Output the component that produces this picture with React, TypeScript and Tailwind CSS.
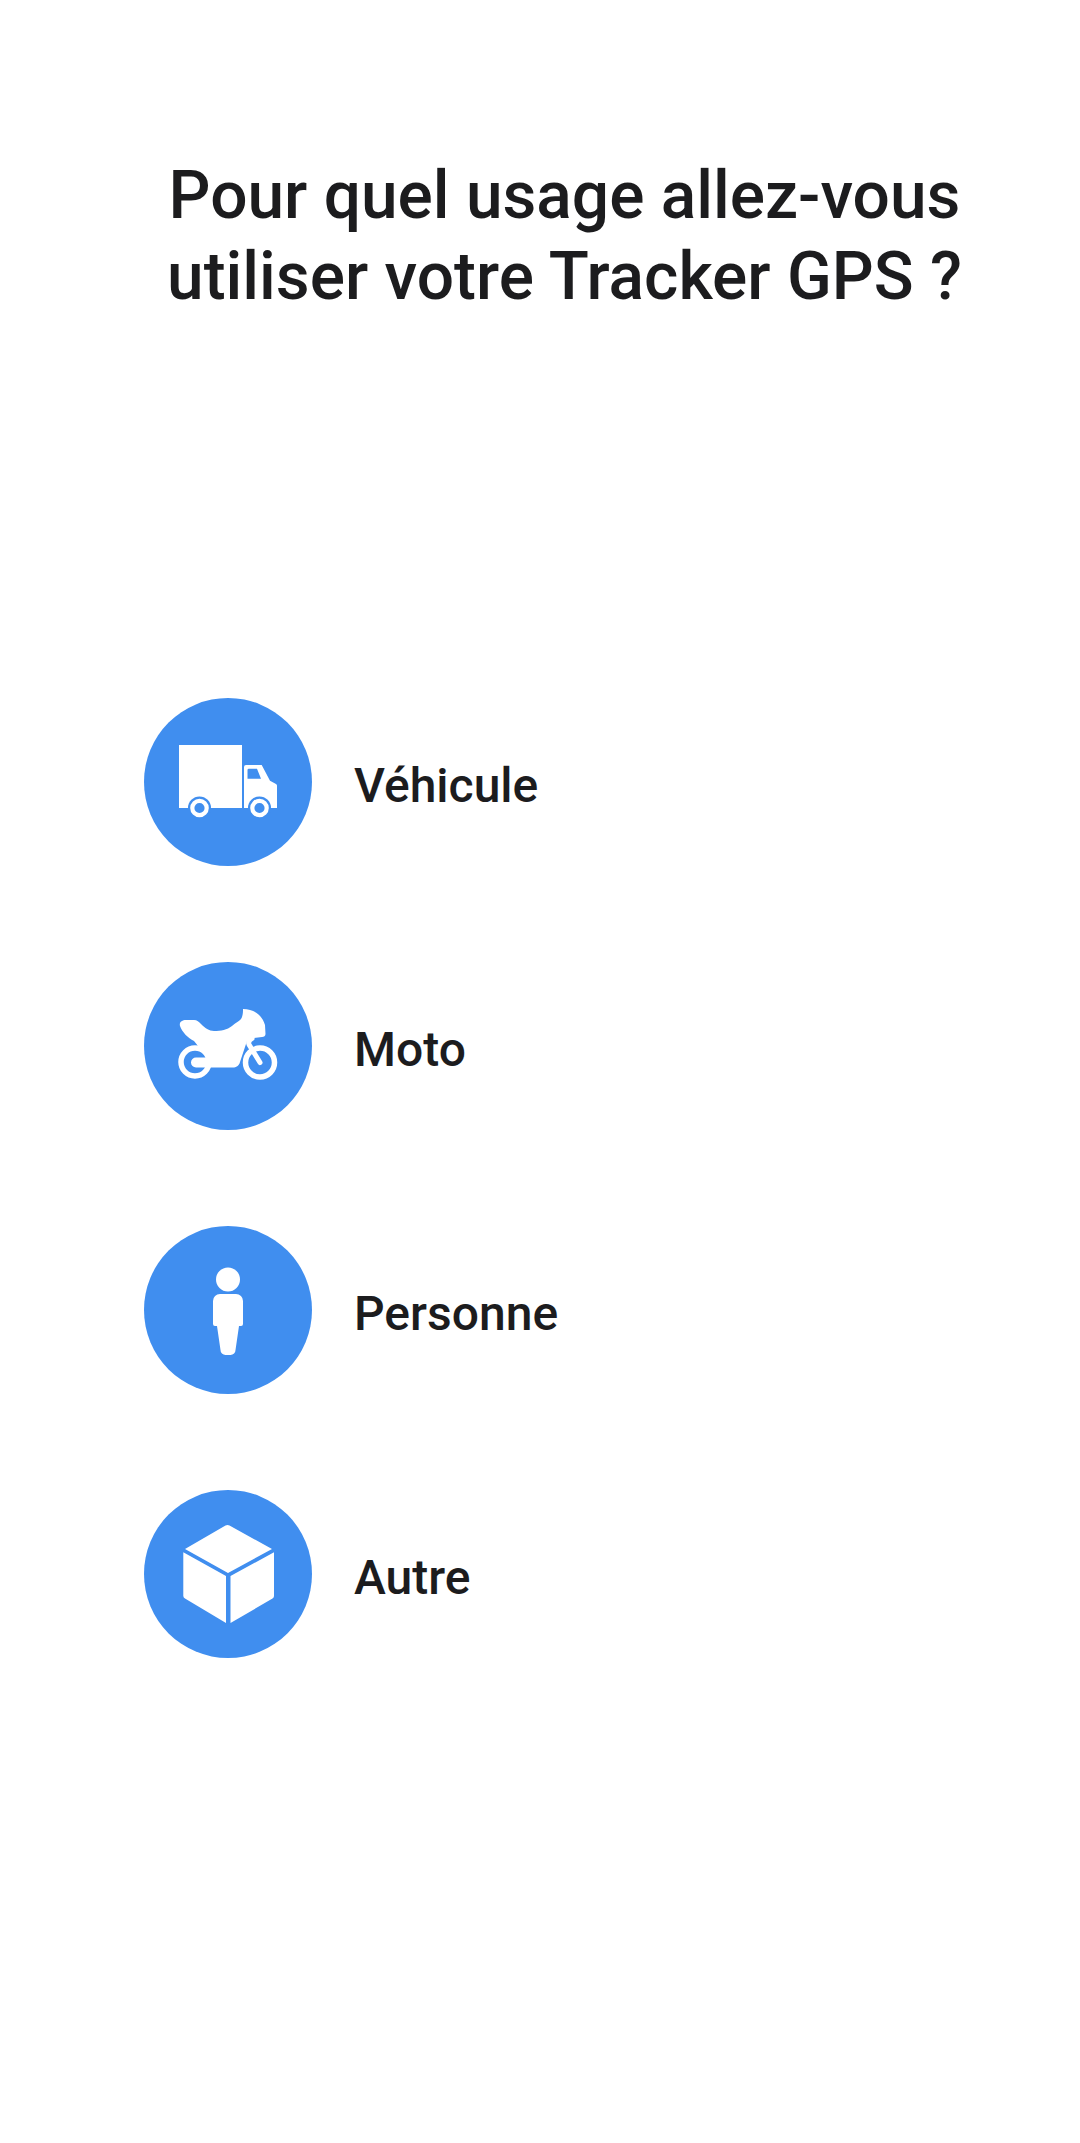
const rows = [
  { label: "Véhicule", icon: <TruckIcon /> },
  { label: "Moto", icon: <BikeIcon /> },
  { label: "Personne", icon: <PersonIcon /> },
  { label: "Autre", icon: <BoxIcon /> },
];

// all icons share the circle's 168 box
function TruckIcon() {
  return (
    <svg viewBox="0 0 168 168" className="w-[168px] h-[168px]">
      <path fill="#fff" d="M35 47h63v63H35z" />
      <path fill="#fff" fillRule="evenodd" d="M100 69a2 2 0 0 1 2-2h15.700l8.300 15.700 6 3.300a2 2 0 0 1 1 2V110h-33zM103.500 72v8.700h13.500l-4-10h-8.200a1.300 1.300 0 0 0-1.300 1.300z" />
      <circle cx="55.500" cy="110" r="11.500" fill="#408eef" />
      <circle cx="115.500" cy="110" r="11.500" fill="#408eef" />
      <circle cx="55.500" cy="110" r="7.200" fill="none" stroke="#fff" strokeWidth="4.200" />
      <circle cx="115.500" cy="110" r="7.200" fill="none" stroke="#fff" strokeWidth="4.200" />
    </svg>
  );
}

function BikeIcon() {
  return (
    <svg viewBox="0 0 168 168" className="w-[168px] h-[168px]">
      <circle cx="51" cy="100" r="14" fill="none" stroke="#fff" strokeWidth="5.500" />
      <path fill="#fff" d="M36 64C35 60 38 58 42 58L50 58C53 58 55 60 57 62C61 66 65 69 70 69C77 69 83 68 88 64C92 60 97 59 98 55C99 52 99 49 99 47C110 47 118 53 121 63L121.500 72C121.500 74 120 75 118 75L110 76C105 76 103 78 102 82L96 100C95 104 92 105.500 89 105.500L52 105.500A5 5 0 0 1 52 95.500L62 95.500L60 92C57 88 54 84 50 79C44 76 38 70 36 64z" />
      <circle cx="116" cy="100.500" r="14.500" fill="none" stroke="#fff" strokeWidth="5.500" />
      <path fill="none" stroke="#fff" strokeWidth="5" strokeLinecap="round" d="M116 100.500L105 82.500c-1-2 0-4 3-6" />
    </svg>
  );
}

function PersonIcon() {
  return (
    <svg viewBox="0 0 168 168" className="w-[168px] h-[168px]">
      <circle cx="84" cy="53.500" r="12" fill="#fff" />
      <path fill="#fff" d="M76 68h16a7 7 0 0 1 7 7v23a2 2 0 0 1-2 2h-2l-3.500 24a5 5 0 0 1-5 5h-5a5 5 0 0 1-5-5L73 100h-2a2 2 0 0 1-2-2V75a7 7 0 0 1 7-7z" />
    </svg>
  );
}

function BoxIcon() {
  return (
    <svg viewBox="0 0 168 168" className="w-[168px] h-[168px]">
      <path fill="#fff" d="M81.500 35.500a4 4 0 0 1 4 0L128 59 84 83 41 59z" />
      <path fill="#fff" d="M39.300 62.300L82 86v47l-41-24.500a3 3 0 0 1-1.700-2.500z" />
      <path fill="#fff" d="M130 62.300L86.500 86v47l42-24.500a3 3 0 0 0 1.500-2.500z" />
    </svg>
  );
}

export default function App() {
  return (
    <div className="min-h-[2143px] bg-white text-[#1c1c1e] font-['Roboto',sans-serif]">
      <h1 className="pt-[155px] pl-[49px] text-center text-[65.8px] leading-[81px] font-medium">
        Pour quel usage allez-vous
        <br />
        utiliser votre Tracker GPS ?
      </h1>
      <div className="mt-[381px] pl-[144px] flex flex-col gap-[96px]">
        {rows.map((row) => (
          <div key={row.label} className="flex items-center gap-[42px]">
            <div className="w-[168px] h-[168px] rounded-full bg-[#408eef] flex items-center justify-center">
              {row.icon}
            </div>
            <span className="pt-[8px] text-[48px] font-medium">{row.label}</span>
          </div>
        ))}
      </div>
    </div>
  );
}
